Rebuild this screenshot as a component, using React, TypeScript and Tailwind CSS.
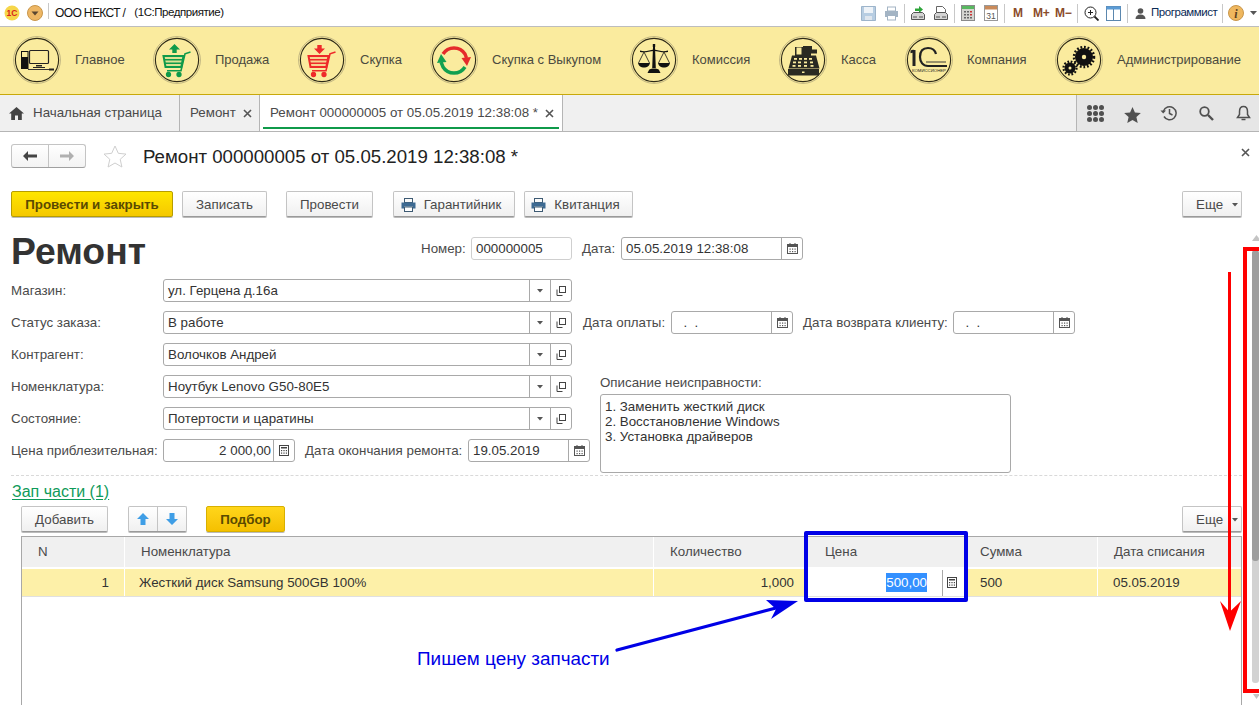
import React from "react";

const Ring = ({ children }: { children?: React.ReactNode }) => (
  <svg width="48" height="48" viewBox="0 0 48 48" className="shrink-0">
    <circle cx="24" cy="24" r="23.4" fill="none" stroke="#b0a678" strokeWidth="0.8" />
    <circle cx="24" cy="24" r="21.6" fill="none" stroke="#2e2a18" strokeWidth="1.1" />
    {children}
  </svg>
);

const Cart = ({ color }: { color: string }) => (
  <g fill="none" stroke={color} strokeWidth="1.5">
    <path d="M37.500 16l-5.500 1.800-4 17H14" strokeWidth="1.600" />
    <path d="M10.500 20h20l-2.200 11H12.500z" fill={color} fillOpacity="0.12" strokeWidth="2" />
    <path d="M11 23.700h19M12 27.300h17.300" />
    <circle cx="15.500" cy="38.500" r="1.900" fill={color} />
    <circle cx="26" cy="38.500" r="1.900" fill={color} />
  </g>
);

const NavIcons: Record<string, React.ReactNode> = {
  main: (
    <Ring>
      <rect x="16.500" y="14.500" width="19" height="13" rx="1" fill="#faeb9e" stroke="#222" strokeWidth="1.200" />
      <path d="M23 29h6v1.500h-6zM20 31h12v1h-12z" fill="#222" />
      <rect x="8" y="15" width="7.500" height="18" fill="#111" />
      <rect x="9" y="16" width="5.500" height="5" fill="#faeb9e" />
      <path d="M15 33.500h24" stroke="#333" strokeWidth="1" />
      <rect x="36" y="32.500" width="5" height="2" fill="#222" />
    </Ring>
  ),
  sale: (
    <Ring>
      <Cart color="#0f9a4a" />
      <path d="M21.500 8l5.500 5.500h-3.300V17h-4.400v-3.500H16z" fill="#0f9a4a" />
    </Ring>
  ),
  buy: (
    <Ring>
      <Cart color="#ee2a2a" />
      <path d="M21.500 18l5.500-5.500h-3.300V9h-4.400v3.500H16z" fill="#ee2a2a" />
    </Ring>
  ),
  cycle: (
    <Ring>
      <path d="M13 18a13 13 0 0 1 22 0l1.500 4" fill="none" stroke="#e52b2b" strokeWidth="3.400" />
      <path d="M41 21l-4 9-5.500-8z" fill="#e52b2b" />
      <path d="M35 31a13 13 0 0 1-22 0l-2-5" fill="none" stroke="#12a050" strokeWidth="3.400" />
      <path d="M7 27l4-9 5.500 8z" fill="#12a050" />
    </Ring>
  ),
  scale: (
    <Ring>
      <g fill="#111">
        <path d="M22.800 8h2.400v3h-2.400zM23 11h2l.8 21h-3.600z" />
        <path d="M19 34c1-2 9-2 10 0l1.500 3h-13z" />
        <path d="M10 14.500c5 1.500 9 0 14-1 5 1 9 2.500 14 1v1.500c-5 1-9-.5-14-1-5 .5-9 2-14 1z" />
        <path d="M8 27h12c-1 3.500-3 4.500-6 4.500S9 30.500 8 27zM28 27h12c-1 3.500-3 4.500-6 4.500s-5-1-6-4.500z" />
      </g>
      <path d="M14 16l-5.500 11M14 16l5.500 11M34 16l-5.500 11M34 16l5.500 11" stroke="#111" strokeWidth="0.800" fill="none" />
    </Ring>
  ),
  cash: (
    <Ring>
      <g fill="#2a2a22">
        <path d="M24 10h9v3.500h5v4h-6v2h5l3.500 13H9.500L13 19.500h3V11h8z" />
        <rect x="9" y="33" width="31" height="6.500" />
      </g>
      <rect x="17.500" y="11.500" width="5" height="7" fill="#faeb9e" />
      <g fill="#faeb9e">
        <rect x="15" y="22" width="3" height="1.800" /><rect x="20" y="22" width="3" height="1.800" /><rect x="25" y="22" width="3" height="1.800" /><rect x="30" y="22" width="3" height="1.800" />
        <rect x="14" y="25.500" width="3" height="1.800" /><rect x="19" y="25.500" width="3" height="1.800" /><rect x="25" y="25.500" width="3" height="1.800" /><rect x="31" y="25.500" width="3" height="1.800" />
        <rect x="13.500" y="29" width="3" height="1.800" /><rect x="19" y="29" width="3" height="1.800" /><rect x="25" y="29" width="3" height="1.800" /><rect x="31.500" y="29" width="3" height="1.800" />
        <rect x="23" y="35.500" width="2.500" height="1.500" />
      </g>
    </Ring>
  ),
  company: (
    <Ring>
      <rect x="7.500" y="14" width="3" height="16" fill="#222" />
      <path d="M5.500 14.500l3-1v3l-3 .8z" fill="#222" />
      <path d="M31 18c-1-4-4-6-8-6-5 0-8 3-8 9 0 5 3 9 8 9h19" fill="none" stroke="#222" strokeWidth="2.200" />
      <path d="M21 26h20" stroke="#7a7458" strokeWidth="1.500" />
      <text x="24" y="36" textAnchor="middle" fontSize="4.300" fontFamily="'Liberation Sans', sans-serif" fill="#222">КОМИССИОНЕР</text>
    </Ring>
  ),
  gears: (
    <Ring>
      <circle cx="29" cy="21" r="9" fill="#111" />
      <circle cx="29" cy="21" r="10" fill="none" stroke="#111" strokeWidth="2.500" strokeDasharray="1.800 1.800" />
      <circle cx="29" cy="21" r="2.200" fill="#faeb9e" />
      <circle cx="15" cy="32" r="5.500" fill="#111" />
      <circle cx="15" cy="32" r="6.500" fill="none" stroke="#111" strokeWidth="2.200" strokeDasharray="1.700 1.700" />
      <circle cx="15" cy="32" r="1.500" fill="#faeb9e" />
    </Ring>
  ),
};

const nav = [
  { icon: "main", label: "Главное", w: "w-[140px]" },
  { icon: "sale", label: "Продажа", w: "w-[145px]" },
  { icon: "buy", label: "Скупка", w: "w-[132px]" },
  { icon: "cycle", label: "Скупка с Выкупом", w: "w-[200px]" },
  { icon: "scale", label: "Комиссия", w: "w-[149px]" },
  { icon: "cash", label: "Касса", w: "w-[126px]" },
  { icon: "company", label: "Компания", w: "w-[150px]" },
  { icon: "gears", label: "Администрирование", w: "w-[190px]" },
];

const Sep = () => <div className="w-px h-[19px] bg-[#c8c8c8] shrink-0" />;

const Floppy = () => (
  <svg width="15" height="15" viewBox="0 0 15 15"><path d="M0.500 0.500h14v14h-14z" fill="#b7cde2" stroke="#9db4ca" /><rect x="3" y="1" width="9" height="6" fill="#eef3f8" /><rect x="4" y="10" width="7" height="4" fill="#dfe6ee" /></svg>
);
const Printer = ({ c = "#a3b4c4" }: { c?: string }) => (
  <svg width="15" height="15" viewBox="0 0 15 15"><rect x="3.500" y="1" width="8" height="4" fill="#fff" stroke={c} /><path d="M1 5h13v6h-2.500v-2h-8v2H1z" fill={c} /><rect x="3.500" y="9.500" width="8" height="4.500" fill="#fff" stroke={c} /></svg>
);
const DocIn = ({ top }: { top?: boolean }) => (
  <svg width="16" height="16" viewBox="0 0 16 16">
    {top ? <path d="M5 3.500h4V1l4 3.500L9 8V6H5z" fill="#2ea53a" /> : <path d="M3.500 8V1.500h6l3 3V8" fill="#fff" stroke="#666" />}
    <path d="M1.500 9.500l2-2h9l2 2v5h-13z" fill="#d4d4d4" stroke="#555" />
    <path d="M3 12h4M9 12h4" stroke="#555" />
  </svg>
);
const CalcTop = () => (
  <svg width="14" height="16" viewBox="0 0 14 16"><rect x="0.500" y="0.500" width="13" height="15" fill="#d5d5d0" stroke="#8a8a8a" /><rect x="1" y="1" width="12" height="3" fill="#58b860" /><g fill="#666"><rect x="3" y="6" width="2" height="1.500" /><rect x="6" y="6" width="2" height="1.500" /><rect x="9" y="6" width="2" height="1.500" fill="#c33" /><rect x="3" y="9" width="2" height="1.500" /><rect x="6" y="9" width="2" height="1.500" /><rect x="9" y="9" width="2" height="1.500" fill="#c33" /><rect x="3" y="12" width="2" height="1.500" /><rect x="6" y="12" width="2" height="1.500" /><rect x="9" y="12" width="2" height="1.500" /></g></svg>
);
const Cal31 = () => (
  <svg width="14" height="16" viewBox="0 0 14 16"><rect x="0.500" y="0.500" width="13" height="15" fill="#fff" stroke="#999" /><rect x="1" y="1" width="12" height="3.500" fill="#c98a5a" /><text x="7" y="13.500" textAnchor="middle" fontSize="8.500" fontFamily="'Liberation Sans', sans-serif" fill="#555">31</text></svg>
);
const Panels = () => (
  <svg width="15" height="15" viewBox="0 0 15 15"><rect x="0.500" y="0.500" width="14" height="14" fill="#fff" stroke="#5b87ae" /><rect x="0.500" y="0.500" width="14" height="3" fill="#5b9bd5" /><path d="M7.500 3v11.500" stroke="#5b87ae" /></svg>
);
const ZoomPlus = () => (
  <svg width="15" height="15" viewBox="0 0 15 15" fill="none" stroke="#222"><circle cx="6.500" cy="6.500" r="5.500" /><path d="M6.500 4v5M4 6.500h5" /><path d="M10.500 10.500l4 4" strokeWidth="1.800" /></svg>
);

const TopBar = () => (
  <div className="h-[27px] border-b border-[#bdbdbd] bg-white flex items-center justify-between text-[12px] text-[#111] pl-[4px]">
    <div className="flex items-center">
      <svg width="16" height="16" viewBox="0 0 16 16" className="shrink-0">
        <circle cx="8" cy="8" r="7.500" fill="#f6d64a" />
        <text x="8" y="11" textAnchor="middle" fontSize="8.500" fontWeight="700" fontFamily="'Liberation Sans', sans-serif" fill="#d8261c">1С</text>
      </svg>
      <svg width="16" height="16" viewBox="0 0 16 16" className="ml-[7px] shrink-0">
        <circle cx="8" cy="8" r="7.500" fill="#eeb765" stroke="#c8964a" />
        <path d="M4.500 6.500h7L8 10.500z" fill="#5a4630" />
      </svg>
      <div className="w-px h-[16px] bg-[#c8c8c8] ml-[5px] -mt-[4px]" />
      <span className="ml-[6px] tracking-[-0.62px]">ООО НЕКСТ /</span>
      <span className="ml-[9px] tracking-[-0.45px] text-[11.500px]">(1С:Предприятие)</span>
    </div>
    <div className="flex items-center pr-[2px] h-full">
      <Floppy />
      <div className="w-[8px]" />
      <Printer />
      <div className="w-[5px]" />
      <Sep />
      <div className="w-[5px]" />
      <DocIn top />
      <div className="w-[7px]" />
      <DocIn />
      <div className="w-[5px]" />
      <Sep />
      <div className="w-[6px]" />
      <CalcTop />
      <div className="w-[9px]" />
      <Cal31 />
      <div className="w-[6px]" />
      <Sep />
      <div className="flex items-center font-bold text-[#8a4b2a] text-[12px] tracking-[-0.2px] w-[72px]">
        <span className="ml-[8px] w-[20px]">M</span>
        <span className="w-[22px]">M+</span>
        <span>M−</span>
      </div>
      <Sep />
      <div className="w-[6px]" />
      <ZoomPlus />
      <div className="w-[7px]" />
      <Panels />
      <div className="w-[6px]" />
      <Sep />
      <svg width="11" height="11" viewBox="0 0 11 11" className="ml-[7px]"><circle cx="5.500" cy="3" r="2.800" fill="#555" /><path d="M0.500 11c0-3 2-4.500 5-4.500s5 1.500 5 4.500z" fill="#555" /></svg>
      <span className="ml-[5px] w-[67px] text-[#0a2a55] tracking-[-0.45px] text-[11.500px] whitespace-nowrap">Программист</span>
      <div className="w-[4px]" />
      <Sep />
      <svg width="16" height="16" viewBox="0 0 16 16" className="ml-[5px]">
        <circle cx="8" cy="8" r="7.500" fill="#efb75e" stroke="#c8964a" />
        <text x="8" y="12.500" textAnchor="middle" fontSize="12" fontWeight="700" fontStyle="italic" fontFamily="'Liberation Serif', serif" fill="#5a4020">i</text>
      </svg>
      <svg width="7" height="4" viewBox="0 0 7 4" className="ml-[6px]"><path d="M0 0h7L3.500 4z" fill="#555" /></svg>
    </div>
  </div>
);

const NavBar = () => (
  <div className="h-[68px] bg-[#faeb9e] border-b-[1px] border-[#c8a90a] flex items-center pl-[13px] pb-[1px]">
    {nav.map((n) => (
      <div key={n.label} className={`flex items-center shrink-0 ${n.w}`}>
        {NavIcons[n.icon]}
        <span className="ml-[14px] text-[13px] text-[#4a4a40] whitespace-nowrap">{n.label}</span>
      </div>
    ))}
  </div>
);

const XMark = () => (
  <svg width="9" height="9" viewBox="0 0 9 9"><path d="M1 1l7 7M8 1L1 8" stroke="#555" strokeWidth="1.600" /></svg>
);

const Tabs = () => (
  <div className="h-[37px] bg-[#f0f0f0] border-b border-[#b5b5b5] flex text-[13.330px] text-[#4a4a4a]">
    <div className="w-[180px] border-r border-[#b5b5b5] flex items-center pl-[9px]">
      <svg width="15" height="13" viewBox="0 0 15 13"><path d="M7.500 0L0 6.500h2.200V13h3.800V8.500h3V13h3.800V6.500H15z" fill="#444" /></svg>
      <span className="ml-[9px] whitespace-nowrap">Начальная страница</span>
    </div>
    <div className="w-[80px] border-r border-[#b5b5b5] flex items-center pl-[10px]">
      <span>Ремонт</span>
      <span className="ml-[7px] flex"><XMark /></span>
    </div>
    <div className="w-[303px] bg-white border-r border-[#b5b5b5] relative flex items-center pl-[10px]">
      <span className="whitespace-nowrap">Ремонт 000000005 от 05.05.2019 12:38:08 *</span>
      <span className="ml-[7px] flex"><XMark /></span>
      <div className="absolute left-[3px] right-[3px] bottom-[2px] h-[2px] bg-[#0f9a4a]" />
    </div>
    <div className="flex-1" />
    <div className="w-[183px] bg-[#e6e6e6] border-l border-[#b5b5b5] flex items-center">
      <svg width="17" height="17" viewBox="0 0 17 17" className="ml-[10px]" fill="#505050">
        {[2.500, 8.500, 14.500].flatMap((y) => [2.500, 8.500, 14.500].map((x) => <circle key={`${x}-${y}`} cx={x} cy={y} r="2.500" />))}
      </svg>
      <svg width="17" height="16" viewBox="0 0 24 23" className="ml-[20px] mt-[3px]"><path d="M12 0l3.500 8 8.500.8-6.400 5.700 1.900 8.500L12 18.600 4.500 23l1.900-8.500L0 8.800 8.500 8z" fill="#505050" /></svg>
      <svg width="17" height="16" viewBox="0 0 17 16" className="ml-[19px]" fill="none" stroke="#505050" strokeWidth="1.500"><path d="M3.500 6a6.500 6.500 0 1 1 .5 5.500" /><path d="M9.500 4v4.500l3 1.500" /><path d="M0.500 5.500h5.500L3.200 8.500z" fill="#505050" stroke="none" /></svg>
      <svg width="15" height="15" viewBox="0 0 15 15" className="ml-[22px]" fill="none" stroke="#505050"><circle cx="5.500" cy="5.500" r="4.300" strokeWidth="1.800" /><path d="M9 9l5 5" strokeWidth="2.400" /></svg>
      <svg width="15" height="16" viewBox="0 0 15 16" className="ml-[22px]" fill="none" stroke="#505050" strokeWidth="1.500"><path d="M7.500 1.500c3 0 4 2 4 5v3l2 3h-12l2-3v-3c0-3 1-5 4-5z" /><path d="M5.500 14.500h4" /></svg>
    </div>
  </div>
);

const Btn = ({ children, className = "" }: { children: React.ReactNode; className?: string }) => (
  <div className={`h-[26px] pt-[1px] flex items-center justify-center rounded-[2px] border border-[#c4c4c4] border-b-[#9a9a9a] bg-gradient-to-b from-white to-[#f0f0f0] shadow-[0_1px_0_#bbb] text-[13.330px] text-[#4a4a4a] whitespace-nowrap shrink-0 ${className}`}>
    {children}
  </div>
);

const PrintIco = () => (
  <svg width="15" height="14" viewBox="0 0 15 14" className="mr-[8px] ml-[-6px]"><rect x="3.500" y="0.500" width="8" height="4" fill="none" stroke="#3d5a73" /><path d="M0.500 4.500h14v6h-2.500v-2H3v2H0.500z" fill="#3d6a92" /><rect x="3.500" y="9" width="8" height="4.500" fill="#fff" stroke="#3d5a73" /></svg>
);

const Caret = () => (
  <svg width="6" height="4" viewBox="0 0 6 4"><path d="M0 0h6L3 3.500z" fill="#555" /></svg>
);

const CalIco = () => (
  <svg width="11" height="11" viewBox="0 0 11 11"><rect x="0.500" y="1.500" width="10" height="9" fill="#fff" stroke="#555" /><rect x="1" y="2" width="9" height="2" fill="#555" /><rect x="2.500" y="0" width="1" height="2" fill="#555" /><rect x="7.500" y="0" width="1" height="2" fill="#555" /><g fill="#555"><rect x="2.500" y="5.500" width="1.200" height="1.200" /><rect x="5" y="5.500" width="1.200" height="1.200" /><rect x="7.500" y="5.500" width="1.200" height="1.200" /><rect x="2.500" y="8" width="1.200" height="1.200" /><rect x="5" y="8" width="1.200" height="1.200" /><rect x="7.500" y="8" width="1.200" height="1.200" /></g></svg>
);

const CalcIco = () => (
  <svg width="10" height="11" viewBox="0 0 10 11"><rect x="0.500" y="0.500" width="9" height="10" fill="#fff" stroke="#444" /><rect x="2" y="2" width="6" height="1.500" fill="#444" /><g fill="#444"><rect x="2" y="5" width="1.200" height="1.200" /><rect x="4.400" y="5" width="1.200" height="1.200" /><rect x="6.800" y="5" width="1.200" height="1.200" /><rect x="2" y="7.500" width="1.200" height="1.200" /><rect x="4.400" y="7.500" width="1.200" height="1.200" /><rect x="6.800" y="7.500" width="1.200" height="1.200" /></g></svg>
);

const OpenIco = () => (
  <svg width="10" height="10" viewBox="0 0 10 10" fill="none" stroke="#444"><rect x="3.500" y="0.500" width="6" height="6" fill="#fff" /><path d="M1 3.500v6h5.500" /></svg>
);

const inputBox = "h-[23px] rounded-[3px] border border-[#a9a9a9] bg-white flex items-stretch text-[13.330px] text-[#333] shrink-0";
const Seg = ({ children }: { children: React.ReactNode }) => (
  <div className="border-l border-[#a9a9a9] flex items-center justify-center w-[21px]">{children}</div>
);

const Select = ({ value }: { value: string }) => (
  <div className={`${inputBox} w-[409px]`}>
    <div className="flex-1 flex items-center pl-[4px]">{value}</div>
    <Seg><Caret /></Seg>
    <Seg><OpenIco /></Seg>
  </div>
);

const DateField = ({ value, w, ico = <CalIco />, right = false }: { value: string; w: string; ico?: React.ReactNode; right?: boolean }) => (
  <div className={`${inputBox} ${w}`}>
    <div className={`flex-1 flex items-center ${right ? "justify-end pr-[2px]" : "pl-[4px]"} whitespace-pre`}>{value}</div>
    <Seg>{ico}</Seg>
  </div>
);

const Label = ({ children, className = "" }: { children: React.ReactNode; className?: string }) => (
  <span className={`text-[13.330px] text-[#4a4a4a] whitespace-nowrap shrink-0 ${className}`}>{children}</span>
);

const Row = ({ label, value }: { label: string; value: string }) => (
  <div className="flex items-center h-[23px]">
    <Label className="w-[152px]">{label}</Label>
    <Select value={value} />
  </div>
);

const App = () => (
  <div className="h-[715px] w-[1259px] overflow-hidden bg-white relative font-['Liberation_Sans',Arial,sans-serif]">
    <TopBar />
    <NavBar />
    <Tabs />
    <div className="flex h-[583px]">
      <div className="w-[1244px] shrink-0 pl-[11px]">
        <div className="flex items-center h-[24px] mt-[12px]">
          <div className="w-[75px] h-[24px] flex rounded-[3px] border border-[#c4c4c4] border-b-[#a0a0a0] bg-gradient-to-b from-white to-[#f3f3f3]">
            <div className="w-[37px] flex items-center justify-center border-r border-[#c4c4c4]">
              <svg width="14" height="10" viewBox="0 0 14 10"><path d="M5 0v3.500h9v3H5V10L0 5z" fill="#444" /></svg>
            </div>
            <div className="flex-1 flex items-center justify-center">
              <svg width="14" height="10" viewBox="0 0 14 10"><path d="M9 0v3.500H0v3h9V10l5-5z" fill="#b0b0b0" /></svg>
            </div>
          </div>
          <svg width="24" height="23" viewBox="0 0 24 23" className="ml-[17px]"><path d="M12 1l3.300 7.300 7.700.8-5.800 5.200 1.700 7.700L12 18l-6.900 4 1.700-7.700L1 9.100l7.700-.8z" fill="#fff" stroke="#cfcfcf" /></svg>
          <span className="ml-[16px] mt-[2px] text-[18.670px] text-[#222] whitespace-nowrap">Ремонт 000000005 от 05.05.2019 12:38:08 *</span>
          <span className="ml-auto mr-[-6px] -mt-[8px] flex"><XMark /></span>
        </div>

        <div className="flex items-center mt-[23px] h-[26px]">
          <Btn className="w-[162px] font-bold !border-[#b79d00] !from-[#ffe600] !to-[#f5c800] !text-[#5a4a00]">Провести и закрыть</Btn>
          <Btn className="w-[85px] ml-[9px]">Записать</Btn>
          <Btn className="w-[87px] ml-[19px]">Провести</Btn>
          <Btn className="w-[122px] ml-[20px]"><PrintIco />Гарантийник</Btn>
          <Btn className="w-[109px] ml-[9px]"><PrintIco />Квитанция</Btn>
          <Btn className="w-[60px] ml-auto mr-[2px] gap-[9px] !justify-start pl-[13px]">Еще<Caret /></Btn>
        </div>

        <div className="flex items-start mt-[14px] h-[48px]">
          <h1 className="text-[37.330px] leading-[41px] font-bold text-[#333] w-[410px] shrink-0">Ремонт</h1>
          <div className="flex items-center mt-[6px]">
            <Label className="w-[50px]">Номер:</Label>
            <div className={`${inputBox} !border-[#cfcfcf] w-[101px] items-center pl-[4px] pt-[1px]`}>000000005</div>
            <Label className="ml-[10px] w-[39px]">Дата:</Label>
            <DateField value="05.05.2019 12:38:08" w="w-[182px]" />
          </div>
        </div>

        <div className="flex items-start">
          <div className="flex flex-col gap-[9px] w-[572px] shrink-0">
            <Row label="Магазин:" value="ул. Герцена д.16а" />
            <Row label="Статус заказа:" value="В работе" />
            <Row label="Контрагент:" value="Волочков Андрей" />
            <Row label="Номенклатура:" value="Ноутбук Lenovo G50-80E5" />
            <Row label="Состояние:" value="Потертости и царатины" />
            <div className="flex items-center h-[23px]">
              <Label className="w-[152px]">Цена приблезительная:</Label>
              <DateField value="2 000,00" w="w-[132px]" ico={<CalcIco />} right />
              <Label className="ml-[10px] w-[163px]">Дата окончания ремонта:</Label>
              <DateField value="19.05.2019" w="w-[122px]" />
            </div>
          </div>
          <div className="pt-[32px]">
            <div className="flex items-center h-[23px]">
              <Label className="w-[88px]">Дата оплаты:</Label>
              <DateField value="  .  ." w="w-[122px]" />
              <Label className="ml-[10px] w-[150px]">Дата возврата клиенту:</Label>
              <DateField value="  .  ." w="w-[122px]" />
            </div>
            <div className="ml-[17px] mt-[42px]">
              <Label className="block leading-[14px]">Описание неисправности:</Label>
              <div className="mt-[4px] w-[411px] h-[79px] rounded-[3px] border border-[#a9a9a9] px-[4px] pt-[4px] text-[13.330px] leading-[15px] text-[#333]">
                <div>1. Заменить жесткий диск</div>
                <div>2. Восстановление Windows</div>
                <div>3. Установка драйверов</div>
              </div>
            </div>
          </div>
        </div>

        <div className="mt-[2px] border-t border-dashed border-[#d9d9d9] w-[1231px]" />
        <div className="mt-[7px] h-[17px] flex items-center">
          <span className="ml-[1px] text-[16px] text-[#0f9a5a] underline underline-offset-[2px] whitespace-nowrap">Зап части (1)</span>
        </div>

        <div className="ml-[10px] w-[1221px]">
          <div className="flex items-center mt-[6px] h-[26px]">
            <Btn className="w-[87px]">Добавить</Btn>
            <div className="ml-[20px] w-[59px] h-[26px] flex rounded-[2px] border border-[#c4c4c4] border-b-[#9a9a9a] bg-gradient-to-b from-white to-[#f0f0f0] shadow-[0_1px_0_#bbb]">
              <div className="w-[29px] border-r border-[#c4c4c4] flex items-center justify-center">
                <svg width="12" height="12" viewBox="0 0 12 12"><path d="M6 0l6 6H8.500v6h-5V6H0z" fill="#3f9ee6" /></svg>
              </div>
              <div className="flex-1 flex items-center justify-center">
                <svg width="12" height="12" viewBox="0 0 12 12"><path d="M6 12l6-6H8.500V0h-5v6H0z" fill="#3f9ee6" /></svg>
              </div>
            </div>
            <Btn className="w-[79px] ml-[19px] font-bold !border-[#d8b000] !from-[#ffd61a] !to-[#f5c000] !text-[#5a4a00]">Подбор</Btn>
            <Btn className="w-[60px] ml-auto gap-[9px] !justify-start pl-[13px]">Еще<Caret /></Btn>
          </div>

          <div className="mt-[4px] h-[169px] border-l border-t border-r border-[#a8a8a8] text-[13.330px] text-[#4a4a4a]">
            <div className="flex h-[31px] bg-[#f0f0f0] border-b-[1px] border-white">
              <div className="w-[103px] border-r border-white flex items-center pl-[16px]">N</div>
              <div className="w-[529px] border-r border-white flex items-center pl-[16px]">Номенклатура</div>
              <div className="w-[154px] border-r border-white flex items-center pl-[16px]">Количество</div>
              <div className="w-[158px] border-r border-white flex items-center pl-[17px]">Цена</div>
              <div className="w-[132px] border-r border-white flex items-center pl-[14px]">Сумма</div>
              <div className="flex-1 flex items-center pl-[16px]">Дата списания</div>
            </div>
            <div className="flex h-[28px] bg-[#fdf0a8] border-b border-[#e0e0e0] mt-[1px] text-[#333]">
              <div className="w-[103px] border-r border-white flex items-center justify-end pr-[15px]">1</div>
              <div className="w-[529px] border-r border-white flex items-center pl-[14px]">Жесткий диск Samsung 500GB 100%</div>
              <div className="w-[154px] border-r border-white flex items-center justify-end pr-[13px]">1,000</div>
              <div className="w-[158px] bg-white flex items-center justify-end">
                <span className="bg-[#3390ff] text-white">500,00</span>
                <div className="ml-[15px] w-[24px] h-[26px] border-l border-[#a8a8a8] flex items-center pl-[4px]"><CalcIco /></div>
              </div>
              <div className="w-[132px] border-r border-white flex items-center pl-[14px]">500</div>
              <div className="flex-1 flex items-center pl-[15px]">05.05.2019</div>
            </div>
          </div>
        </div>
      </div>

      <div className="flex-1 relative">
        <div className="ml-[8px] w-[7px] mt-[118px] h-[433px] rounded-[3px] bg-[#d2d2d2] overflow-hidden">
          <div className="h-[311px] bg-[#9e9e9e] rounded-[3px]" />
        </div>
        <svg width="9" height="6" viewBox="0 0 9 6" className="absolute left-[8px] top-[103px]"><path d="M4.500 0L9 6H0z" fill="#c4c4c4" /></svg>
        <svg width="7" height="5" viewBox="0 0 7 5" className="absolute left-[9px] top-[562px]"><path d="M3.500 5L7 0H0z" fill="#c4c4c4" /></svg>
      </div>
    </div>

    {/* annotations over the page */}
    <div className="absolute left-[804px] top-[531px] w-[164px] h-[71px] border-[4px] border-[#0000e6] rounded-[2px]" />
    <div className="absolute left-[1243px] top-[247px] w-[20px] h-[446px] border-[4px] border-[#ff0000]" />
    <svg width="1259" height="715" viewBox="0 0 1259 715" className="absolute left-0 top-0 pointer-events-none">
      <path d="M1229.500 272V612" stroke="#ff0000" strokeWidth="3" />
      <path d="M1220 601L1229.500 612L1241 601L1230 631z" fill="#ff0000" />
      <path d="M617 650L776 608" stroke="#0000e6" strokeWidth="3.200" strokeLinecap="round" />
      <path d="M798 601L766 600L776 609L771 619z" fill="#0000e6" />
    </svg>
    <span className="absolute left-[417px] top-[650px] text-[18.900px] leading-[18px] text-[#0000e6] whitespace-nowrap">Пишем цену запчасти</span>
  </div>
);

export default App;
